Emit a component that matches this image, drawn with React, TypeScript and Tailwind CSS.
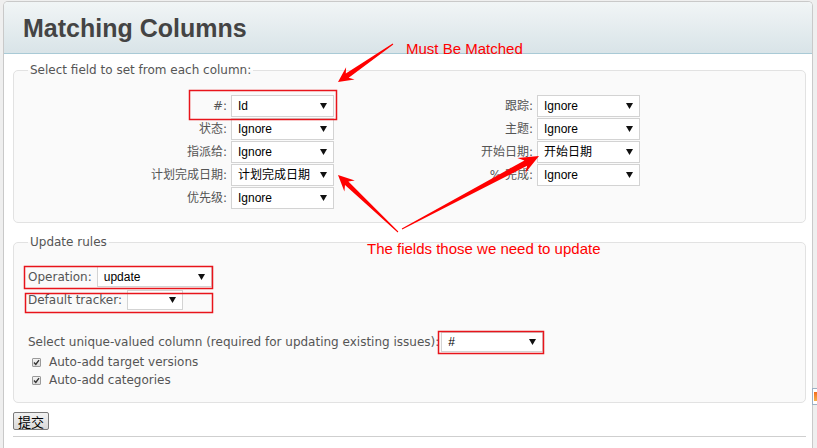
import React from "react";

type SelProps = { v?: string; cls: string };

function Sel({ v = "", cls }: SelProps) {
  return (
    <div
      className={`flex items-center bg-white border border-[#d3d3d3] text-[12px] text-black font-['Liberation_Sans','Noto_Sans_CJK_SC',sans-serif] ${cls}`}
    >
      <span className="pl-[6px] whitespace-nowrap leading-none">{v}</span>
      <svg className="ml-auto mr-[6px] shrink-0" width="7" height="6" viewBox="0 0 7 6">
        <polygon points="0,0 7,0 3.5,6" fill="#111" />
      </svg>
    </div>
  );
}

function Check() {
  return (
    <span className="inline-flex items-center justify-center w-[9px] h-[9px] border border-[#9a9a9a] rounded-[1px] bg-gradient-to-b from-[#f4f4f4] to-[#dcdcdc]">
      <svg width="7" height="7" viewBox="0 0 7 7">
        <path d="M1 3.6 L2.8 5.4 L6 1.2" stroke="#333" strokeWidth="1.4" fill="none" />
      </svg>
    </span>
  );
}

function arrow(tx: number, ty: number, px: number, py: number, tailW: number, shaftW: number, headL: number, headW: number) {
  const dx = px - tx;
  const dy = py - ty;
  const L = Math.hypot(dx, dy);
  const ux = dx / L;
  const uy = dy / L;
  const nx = -uy;
  const ny = ux;
  const hx = px - ux * headL;
  const hy = py - uy * headL;
  const bx = px - ux * (headL * 0.75);
  const by = py - uy * (headL * 0.75);
  const pts: [number, number][] = [
    [tx + (nx * tailW) / 2, ty + (ny * tailW) / 2],
    [bx + (nx * shaftW) / 2, by + (ny * shaftW) / 2],
    [hx + (nx * headW) / 2, hy + (ny * headW) / 2],
    [px, py],
    [hx - (nx * headW) / 2, hy - (ny * headW) / 2],
    [bx - (nx * shaftW) / 2, by - (ny * shaftW) / 2],
    [tx - (nx * tailW) / 2, ty - (ny * tailW) / 2],
  ];
  return pts.map((p) => `${p[0].toFixed(1)},${p[1].toFixed(1)}`).join(" ");
}

const rows: [string, string, string | null, string | null][] = [
  ["#:", "Id", "跟踪:", "Ignore"],
  ["状态:", "Ignore", "主题:", "Ignore"],
  ["指派给:", "Ignore", "开始日期:", "开始日期"],
  ["计划完成日期:", "计划完成日期", "% 完成:", "Ignore"],
  ["优先级:", "Ignore", null, null],
];

export default function App() {
  return (
    <div className="relative w-[817px] h-[448px] overflow-hidden bg-[#efefef] font-['DejaVu_Sans','Noto_Sans_CJK_SC',sans-serif] text-[12px] text-[#555]">
      <div className="ml-[3px] mt-px w-[810px] h-[460px] bg-white border-l border-r border-t border-[#c9c9c9] rounded-t-[5px] overflow-hidden">
        <div className="h-[52px] border-b border-[#a9cad6] bg-gradient-to-b from-[#f1f5f6] to-[#d9e4e8] pl-[19px] pt-[12px]">
          <h2 className="font-['Liberation_Sans',sans-serif] font-bold text-[25px] leading-[29px] text-[#444]">
            Matching Columns
          </h2>
        </div>

        <fieldset className="ml-[9px] mt-[9px] w-[793px] border border-[#e2e2e2] rounded-[5px] bg-[#fafafa] pl-[14px] pt-[17px] pb-[13px]">
          <legend className="px-[2px] leading-[15px] text-[#555]">Select field to set from each column:</legend>
          <div className="grid grid-cols-[199px_103px_195px_103px] gap-x-[4px] gap-y-px">
            {rows.map((r, i) => (
              <React.Fragment key={i}>
                <div className="h-[22px] flex items-center justify-end whitespace-nowrap">{r[0]}</div>
                <Sel v={r[1]} cls="h-[22px] w-[103px]" />
                {r[2] ? (
                  <div className="h-[22px] flex items-center justify-end whitespace-nowrap">{r[2]}</div>
                ) : (
                  <div />
                )}
                {r[3] ? <Sel v={r[3]} cls="h-[22px] w-[103px]" /> : <div />}
              </React.Fragment>
            ))}
          </div>
        </fieldset>

        <fieldset className="ml-[9px] mt-[12px] w-[793px] border border-[#e2e2e2] rounded-[5px] bg-[#fafafa] pl-[14px] pt-[16px] pb-[13px]">
          <legend className="px-[2px] leading-[15px] text-[#555]">Update rules</legend>
          <div className="flex items-center h-[21px]">
            <span>Operation:</span>
            <Sel v="update" cls="ml-[5px] h-[21px] w-[115px]" />
          </div>
          <div className="flex items-center h-[20px] mt-[3px]">
            <span>Default tracker:</span>
            <Sel v="" cls="ml-[5px] h-[20px] w-[56px]" />
          </div>
          <div className="flex items-center h-[20px] mt-[22px]">
            <span>Select unique-valued column (required for updating existing issues):</span>
            <Sel v="#" cls="ml-[2px] h-[20px] w-[102px]" />
          </div>
          <div className="flex items-center h-[18px] pl-[4px] mt-[1px] gap-[8px]">
            <Check />
            <span>Auto-add target versions</span>
          </div>
          <div className="flex items-center h-[18px] pl-[4px] gap-[8px]">
            <Check />
            <span>Auto-add categories</span>
          </div>
        </fieldset>

        <button className="ml-[9px] mt-[9px] w-[36px] h-[18px] flex items-center justify-center border border-[#7a7a7a] rounded-[2px] bg-gradient-to-b from-[#f2f2f2] to-[#dadada] text-[13px] text-black font-['Noto_Sans_CJK_SC',sans-serif] leading-none">
          提交
        </button>
        <div className="ml-[9px] mt-[6px] w-[793px] border-t border-[#cfcfcf]" />
      </div>

      {/* right edge widget */}
      <div className="absolute left-[812px] top-[388px] w-[6px] h-[17px] border border-[#9db0c4] bg-white flex items-center justify-center">
        <div className="w-[3px] h-[9px] bg-gradient-to-b from-[#f26b1d] to-[#f7b04a]" />
      </div>

      {/* annotations */}
      <div className="absolute left-[406px] top-[40px] text-[15px] leading-[17px] text-[#ff0000] font-['Liberation_Sans',sans-serif] whitespace-nowrap">
        Must Be Matched
      </div>
      <div className="absolute left-[367px] top-[240px] text-[15px] leading-[17px] text-[#ff0000] font-['Liberation_Sans',sans-serif] whitespace-nowrap">
        The fields those we need to update
      </div>
      <svg className="absolute left-0 top-0 pointer-events-none" width="817" height="448" viewBox="0 0 817 448">
        <g fill="none" stroke="#e8141b" strokeWidth="1.5">
          <rect x="189.5" y="90.5" width="147" height="29" />
          <rect x="24.5" y="266.5" width="188" height="22" />
          <rect x="25.5" y="293.5" width="187" height="19" />
          <rect x="438.5" y="331.5" width="105" height="22" />
        </g>
        <g fill="#ff0000">
          <polygon points={arrow(393, 44, 338, 82, 1, 5, 15, 15)} />
          <polygon points={arrow(398, 232, 338, 175, 1, 5, 16, 15)} />
          <polygon points={arrow(402, 229, 539, 156, 1, 6, 20, 17)} />
        </g>
      </svg>
    </div>
  );
}
